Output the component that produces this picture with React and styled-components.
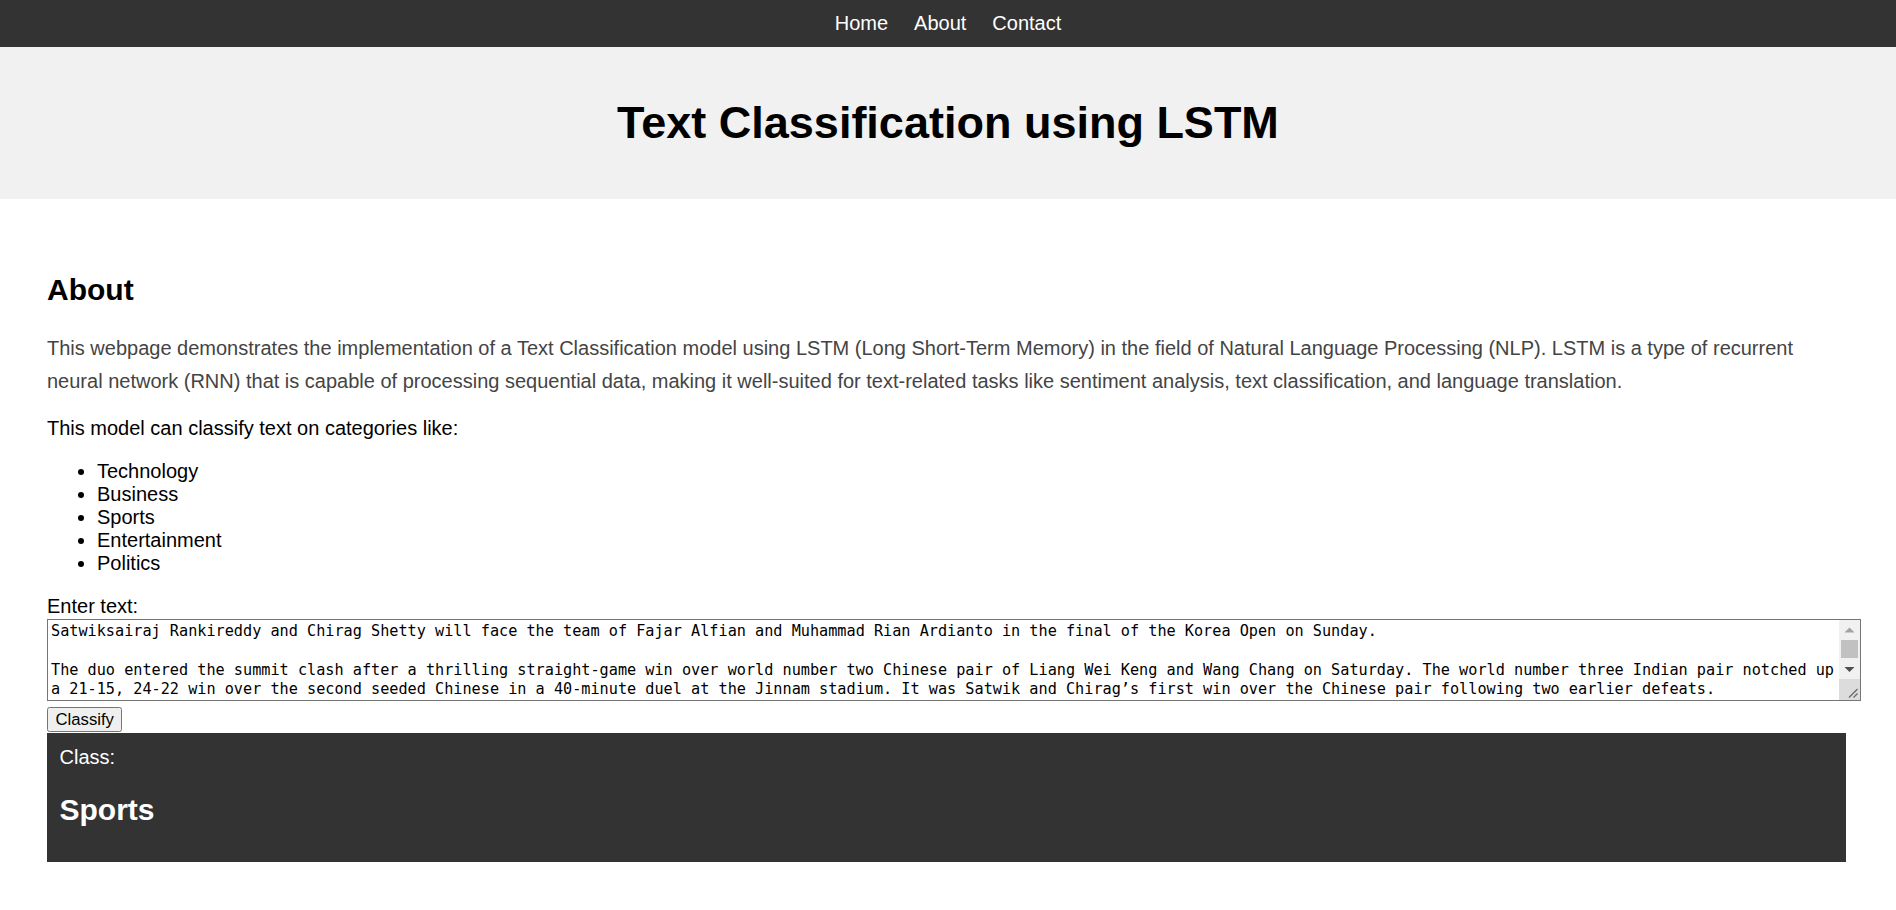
import React, { useState } from 'react'
import styled, { createGlobalStyle } from 'styled-components'

const GlobalStyle = createGlobalStyle`
  html, body {
    margin: 0;
    padding: 0;
    background: #ffffff;
    font-family: 'Liberation Sans', Arial, sans-serif;
    font-size: 20px;
    color: #000;
  }
`

const categories = ['Technology', 'Business', 'Sports', 'Entertainment', 'Politics']

const sample =
  'Satwiksairaj Rankireddy and Chirag Shetty will face the team of Fajar Alfian and Muhammad Rian Ardianto in the final of the Korea Open on Sunday.\n\n' +
  'The duo entered the summit clash after a thrilling straight-game win over world number two Chinese pair of Liang Wei Keng and Wang Chang on Saturday. The world number three Indian pair notched up\n' +
  'a 21-15, 24-22 win over the second seeded Chinese in a 40-minute duel at the Jinnam stadium. It was Satwik and Chirag’s first win over the Chinese pair following two earlier defeats.\n\n' +
  'The Indian pair had also reached the final of the Indonesia Open last month, where they went on to win the title.\n\n' +
  'They will now look to add another crown to their tally this season.'

// textarea scrollbar drawn by hand, the native one is hidden in the capture
const FakeScrollbar = () => (
  <ScrollColumn>
    <ScrollButton>
      <svg width="21" height="21" viewBox="0 0 21 21">
        <path d="M5.5 12.5 L10.5 7.5 L15.5 12.5 Z" fill="#a3a3a3" />
      </svg>
    </ScrollButton>
    <ScrollTrack>
      <ScrollThumb />
    </ScrollTrack>
    <ScrollButton>
      <svg width="21" height="21" viewBox="0 0 21 21">
        <path d="M5.5 8 L10.5 13 L15.5 8 Z" fill="#505050" />
      </svg>
    </ScrollButton>
    <ScrollCorner>
      <svg width="21" height="21" viewBox="0 0 21 21">
        <path d="M18.5 10 L10 18.5 M18.5 14.5 L14.5 18.5" stroke="#6a6a6a" strokeWidth="1.3" />
      </svg>
    </ScrollCorner>
  </ScrollColumn>
)

const App = () => {
  const [text, setText] = useState(sample)
  return (
    <Page>
      <GlobalStyle />
      <Nav>
        <NavLink href="#">Home</NavLink>
        <NavLink href="#">About</NavLink>
        <NavLink href="#">Contact</NavLink>
      </Nav>
      <Header>
        <Title>Text Classification using LSTM</Title>
      </Header>
      <Main>
        <SectionTitle>About</SectionTitle>
        <Intro>
          This webpage demonstrates the implementation of a Text Classification model using LSTM (Long
          Short-Term Memory) in the field of Natural Language Processing (NLP). LSTM is a type of recurrent
          neural network (RNN) that is capable of processing sequential data, making it well-suited for
          text-related tasks like sentiment analysis, text classification, and language translation.
        </Intro>
        <Lead>This model can classify text on categories like:</Lead>
        <CategoryList>
          {categories.map(c => (
            <li key={c}>{c}</li>
          ))}
        </CategoryList>
        <Label htmlFor="text">Enter text:</Label>
        <TextBox>
          <TextInput id="text" value={text} onChange={e => setText(e.target.value)} spellCheck="true" />
          <FakeScrollbar />
        </TextBox>
        <ClassifyButton>Classify</ClassifyButton>
        <Result>
          <ResultLabel>Class:</ResultLabel>
          <ResultValue>Sports</ResultValue>
        </Result>
      </Main>
    </Page>
  )
}

const Page = styled.div`
  min-height: 910px;
`

const Nav = styled.nav`
  display: flex;
  justify-content: center;
  gap: 26px;
  height: 47px;
  align-items: center;
  background-color: #333333;
`

const NavLink = styled.a`
  color: #ffffff;
  text-decoration: none;
  font-size: 20px;
  line-height: 23px;
`

const Header = styled.header`
  background-color: #f1f1f1;
  padding: 20px 0;
  text-align: center;
`

const Title = styled.h1`
  margin: 30px 0;
  font-size: 45px;
  line-height: 52px;
  font-weight: bold;
  color: #000000;
`

const Main = styled.main`
  padding: 48.5px 50px 0 47px;
`

const SectionTitle = styled.h2`
  margin: 25px 0;
  font-size: 30px;
  line-height: 34.5px;
  font-weight: bold;
`

const Intro = styled.p`
  margin: 0 0 20px;
  color: #444444;
  line-height: 32.5px;
`

const Lead = styled.p`
  margin: 0 0 20px;
  line-height: 23px;
`

const CategoryList = styled.ul`
  margin: 0 0 20px;
  padding-left: 50px;
  line-height: 23px;
`

const Label = styled.label`
  display: block;
  line-height: 23px;
  margin-bottom: 1px;
`

const TextBox = styled.div`
  position: relative;
  width: calc(100% + 15px);
  height: 82px;
  margin: 0 0 6px;
`

const TextInput = styled.textarea`
  display: block;
  box-sizing: border-box;
  width: 100%;
  height: 100%;
  margin: 0;
  padding: 2px 24px 2px 3px;
  border: 1px solid #767676;
  border-radius: 0;
  font-family: 'DejaVu Sans Mono', 'Liberation Mono', monospace;
  font-size: 15.2px;
  line-height: 19.3px;
  color: #000;
  overflow-y: scroll;
  resize: none;
`

const ScrollColumn = styled.div`
  position: absolute;
  top: 1px;
  right: 1px;
  bottom: 1px;
  width: 21px;
  display: flex;
  flex-direction: column;
  background: #f1f1f1;
  pointer-events: none;
`

const ScrollButton = styled.div`
  height: 20px;
  display: flex;
  align-items: center;
  justify-content: center;
`

const ScrollTrack = styled.div`
  flex: 1;
  padding: 0 2px;
`

const ScrollThumb = styled.div`
  height: 18px;
  background: #c1c1c1;
`

const ScrollCorner = styled.div`
  height: 21px;
  background: #dcdcdc;
`

const ClassifyButton = styled.button`
  display: block;
  height: 25px;
  padding: 1px 7.5px;
  margin: 0 0 1px;
  font-family: 'Liberation Sans', Arial, sans-serif;
  font-size: 16.7px;
  color: #000;
  background-color: #efefef;
  border: 1px solid #767676;
  border-radius: 2.5px;
`

const Result = styled.section`
  background-color: #333333;
  color: #ffffff;
  padding: 12.5px;
`

const ResultLabel = styled.div`
  line-height: 23px;
`

const ResultValue = styled.h2`
  margin: 24px 0 23px;
  font-size: 30px;
  line-height: 34px;
  font-weight: bold;
`

export default App
